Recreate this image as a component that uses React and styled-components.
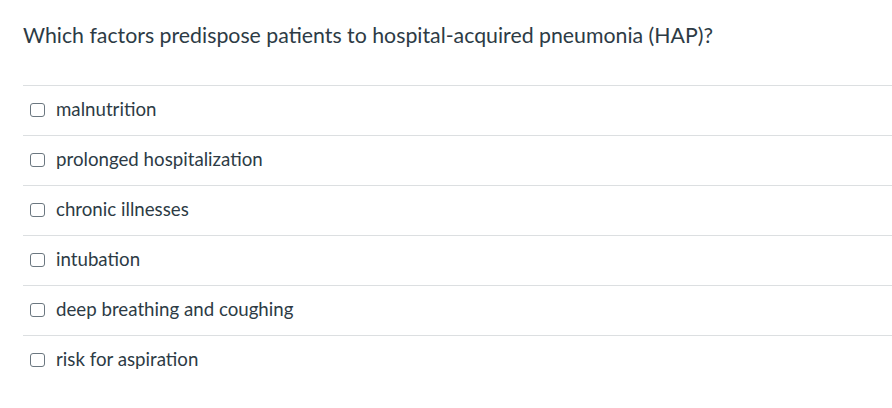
import React from "react";
import styled, { createGlobalStyle } from "styled-components";

const Global = createGlobalStyle`
  html, body { margin: 0; padding: 0; background: #fff; }
  body { font-family: Lato, "Noto Sans", sans-serif; color: #2d3b45; }
`;

const Page = styled.div`
  padding: 20px 0 0 23px;
`;

const Question = styled.h1`
  margin: 0;
  font-size: 21.3px;
  font-weight: 400;
  line-height: 30px;
  color: #2d3b45;
`;

const List = styled.div`
  margin-top: 35px;
  display: flex;
  flex-direction: column;
`;

const Row = styled.label`
  display: flex;
  align-items: center;
  gap: 11px;
  border-top: 1px solid #dcdfe1;
  padding-left: 7px;
  padding-bottom: 4px;
  box-sizing: border-box;
  height: 50px;
  font-size: 18.7px;
  color: #2d3b45;
`;

const Box = styled.span`
  width: 13px;
  height: 12px;
  border: 1.5px solid #6b7780;
  border-radius: 3px;
  flex: none;
  margin-top: 3px;
`;

const options = [
  "malnutrition",
  "prolonged hospitalization",
  "chronic illnesses",
  "intubation",
  "deep breathing and coughing",
  "risk for aspiration",
];

export default function App() {
  return (
    <Page>
      <Global />
      <Question>Which factors predispose patients to hospital-acquired pneumonia (HAP)?</Question>
      <List>
        {options.map((o) => (
          <Row key={o}>
            <Box />
            <span>{o}</span>
          </Row>
        ))}
      </List>
    </Page>
  );
}
